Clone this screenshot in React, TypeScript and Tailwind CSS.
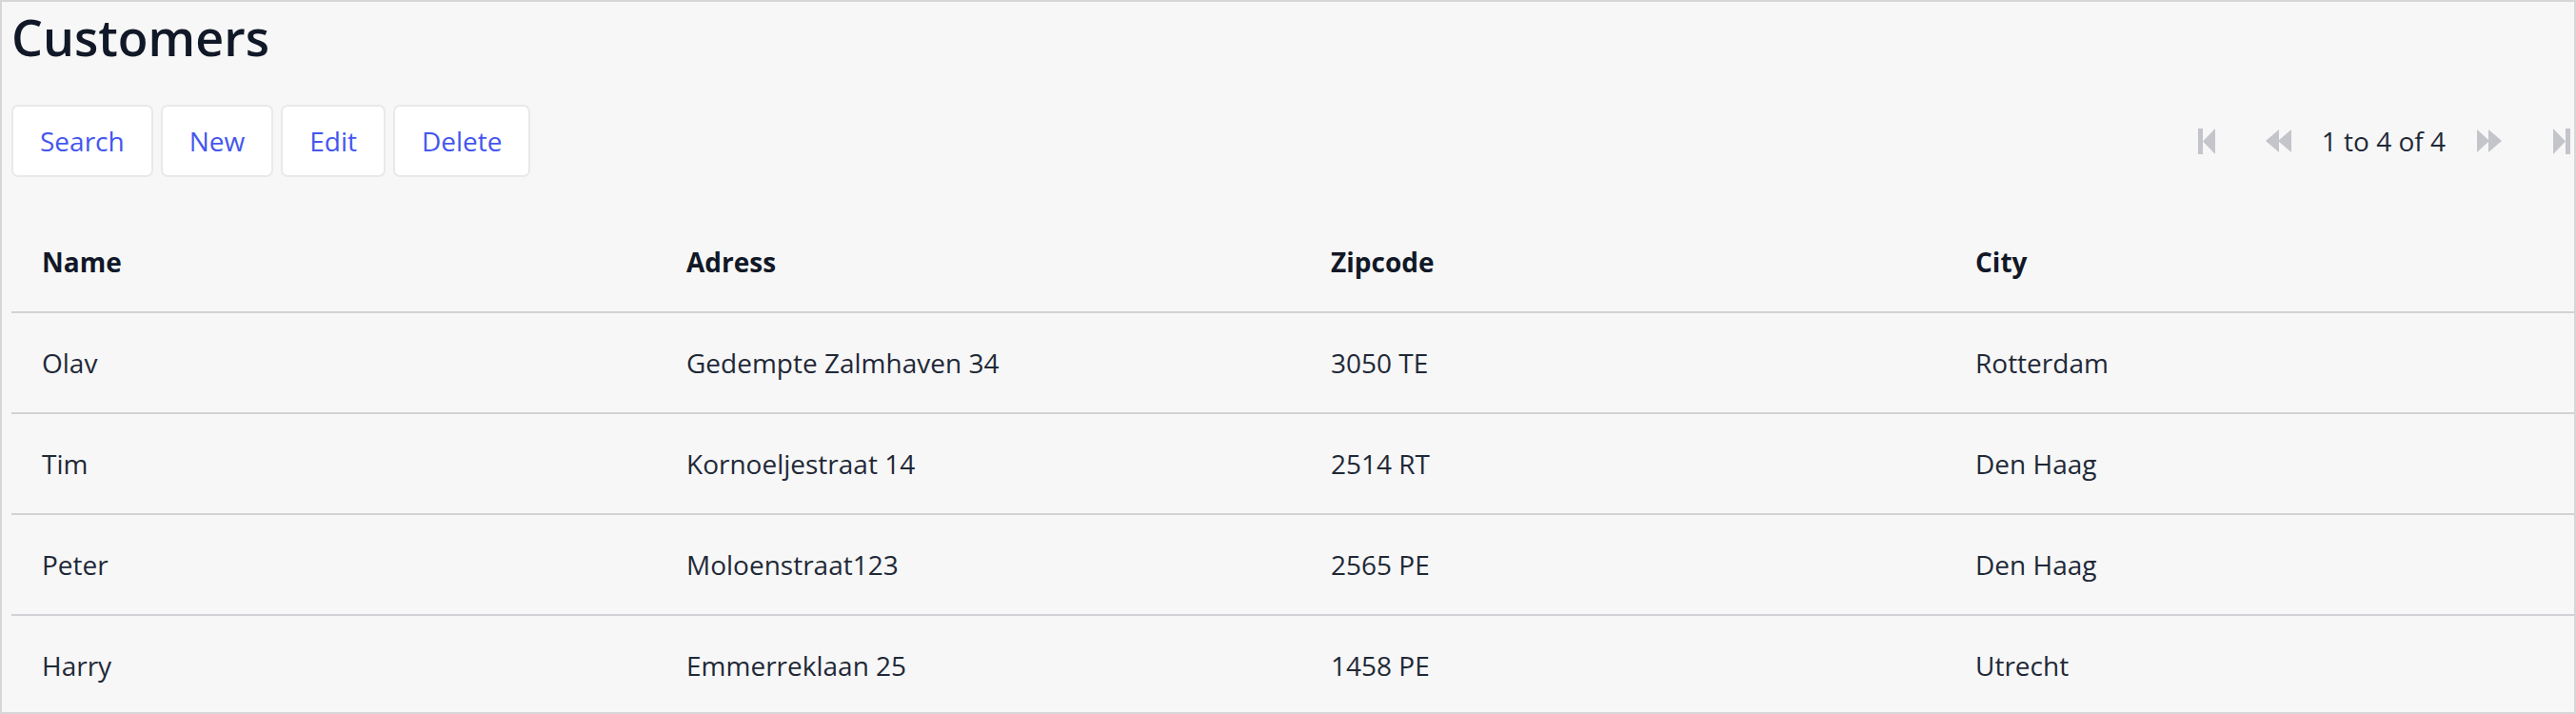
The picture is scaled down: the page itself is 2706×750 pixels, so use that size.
import React from 'react';

const CUSTOMERS = [
  { name: 'Olav', address: 'Gedempte Zalmhaven 34', zipcode: '3050 TE', city: 'Rotterdam' },
  { name: 'Tim', address: 'Kornoeljestraat 14', zipcode: '2514 RT', city: 'Den Haag' },
  { name: 'Peter', address: 'Moloenstraat123', zipcode: '2565 PE', city: 'Den Haag' },
  { name: 'Harry', address: 'Emmerreklaan 25', zipcode: '1458 PE', city: 'Utrecht' },
];

const COLUMNS = ['Name', 'Adress', 'Zipcode', 'City'];

function FirstIcon() {
  return (
    <svg width="18" height="27" viewBox="0 0 18 27" className="fill-[#c4c5ca]">
      <rect x="0" y="0" width="5" height="27" />
      <polygon points="18,0 5,13.5 18,27" />
    </svg>
  );
}

function PrevIcon() {
  return (
    <svg width="27" height="24" viewBox="0 0 27 24" className="fill-[#c4c5ca]">
      <polygon points="14,0 0,12 14,24" />
      <polygon points="27,0 13,12 27,24" />
    </svg>
  );
}

function NextIcon() {
  return (
    <svg width="26" height="24" viewBox="0 0 26 24" className="fill-[#c4c5ca]">
      <polygon points="0,0 13,12 0,24" />
      <polygon points="12,0 26,12 12,24" />
    </svg>
  );
}

function LastIcon() {
  return (
    <svg width="18" height="27" viewBox="0 0 18 27" className="fill-[#c4c5ca]">
      <polygon points="0,0 13,13.5 0,27" />
      <rect x="13" y="0" width="5" height="27" />
    </svg>
  );
}

function ToolButton({ label }: { label: string }) {
  return (
    <button className="h-[76px] px-[28px] rounded-[7px] border-2 border-[#e9e9eb] bg-white text-[28px] text-[#4456ee]">
      {label}
    </button>
  );
}

export default function App() {
  return (
    <div className="h-[750px] w-full overflow-hidden border-2 border-[#d6d6d6] bg-[#f7f7f7] font-['Open_Sans',sans-serif]">
      <div className="flex flex-col pl-[10px] pr-[4px]">
        <h1 className="mt-[6px] text-[52px] leading-[62px] font-semibold text-[#111827]">Customers</h1>

        <div className="mt-[40px] flex items-center justify-between">
          <div className="flex gap-[8px]">
            <ToolButton label="Search" />
            <ToolButton label="New" />
            <ToolButton label="Edit" />
            <ToolButton label="Delete" />
          </div>

          <div className="flex items-center text-[28px] text-[#1f2937]">
            <FirstIcon />
            <div className="ml-[53px]">
              <PrevIcon />
            </div>
            <span className="ml-[32px] mr-[33px]">1 to 4 of 4</span>
            <NextIcon />
            <div className="ml-[54px]">
              <LastIcon />
            </div>
          </div>
        </div>

        <div className="mt-[37px] w-[2708px] shrink-0">
          <div className="grid h-[106px] grid-cols-4 items-center border-b-2 border-[#d2d2d6]">
            {COLUMNS.map((col) => (
              <div key={col} className="pl-[32px] text-[28px] font-bold text-[#111827]">
                {col}
              </div>
            ))}
          </div>
          {CUSTOMERS.map((c) => (
            <div key={c.name} className="grid h-[106px] grid-cols-4 items-center border-b-2 border-[#d2d2d6]">
              <div className="pl-[32px] text-[28px] text-[#1f2937]">{c.name}</div>
              <div className="pl-[32px] text-[28px] text-[#1f2937]">{c.address}</div>
              <div className="pl-[32px] text-[28px] text-[#1f2937]">{c.zipcode}</div>
              <div className="pl-[32px] text-[28px] text-[#1f2937]">{c.city}</div>
            </div>
          ))}
        </div>
      </div>
    </div>
  );
}
